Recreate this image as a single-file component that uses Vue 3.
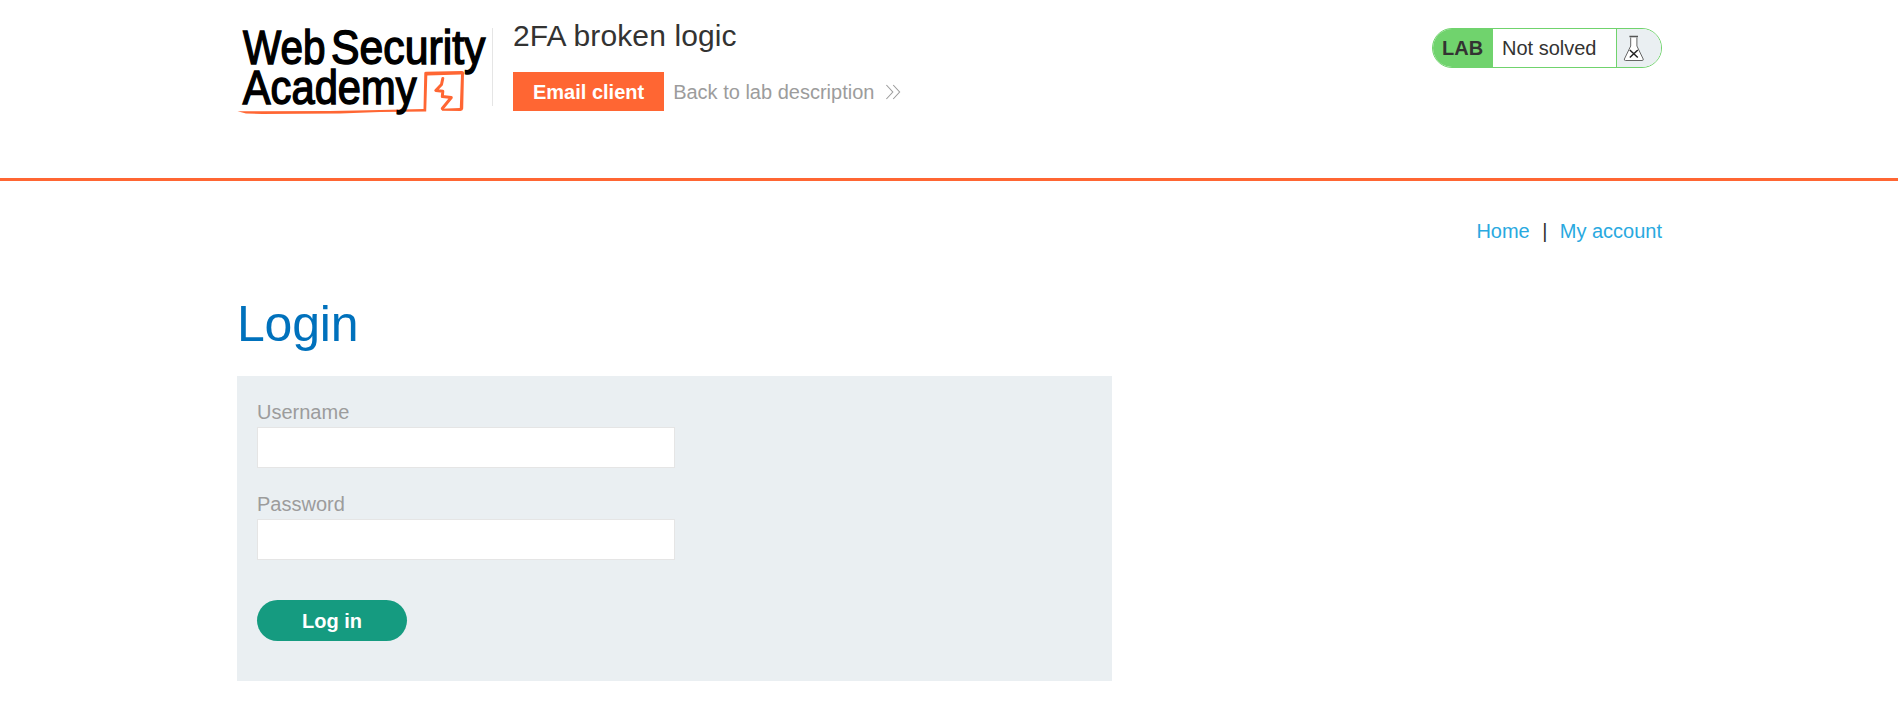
<script setup>
import { ref } from 'vue'

const username = ref('')
const password = ref('')
</script>

<template>
  <div class="page">
    <header class="header">
      <svg class="logo" width="252" height="92" viewBox="237 26 252 92" aria-label="Web Security Academy">
        <path fill="#ff6633" d="M237.5 111.2 L262 111.2 L330 110.9 L380 109.9 L423.5 108.9 L424.3 73 Q424.3 71.7 426 71.7 L462 70.9 Q464 71 464 72.8 L463.2 108.5 Q463 110.8 460.5 110.9 L442 110.8 L441.5 108.8 L459.8 108 L461 74.6 L427.3 75.4 L426.2 111.6 L380 112 L340 113.4 L262 113.9 L246 113.4 Z" />
        <path fill="none" stroke="#ff6633" stroke-width="3" stroke-linejoin="round" stroke-linecap="round" d="M442.8 78.5 L441.5 84.5 L435.8 90.5 L442.8 91.2 L442.3 96.6 L451.3 97.5 L442.3 108.5" />
        <g class="wordmark">
          <text x="243" y="63.7" textLength="82.4" lengthAdjust="spacingAndGlyphs">Web</text>
          <text x="331" y="63.7" textLength="154.4" lengthAdjust="spacingAndGlyphs">Security</text>
          <text x="242.8" y="104.1" textLength="173.8" lengthAdjust="spacingAndGlyphs">Academy</text>
        </g>
      </svg>
      <div class="lab-info">
        <h2>2FA broken logic</h2>
        <div class="actions">
          <a class="email">Email client</a>
          <a class="back">Back to lab description
            <svg width="16" height="16" viewBox="0 0 16 16"><path d="M1.4 1 L7.8 8 L1.4 15 M8.2 1 L14.6 8 L8.2 15" fill="none" stroke="#9c9c9c" stroke-width="1.1" /></svg>
          </a>
        </div>
      </div>
      <div class="status">
        <span class="lab">LAB</span>
        <span class="state">Not solved</span>
        <span class="flask">
          <svg width="22" height="28" viewBox="0 0 22 28">
            <path d="M7.7 2.5 V11 L1.4 24 Q1 25.5 2.4 25.5 H19.2 Q20.6 25.5 20.2 24 L13.9 11 V2.5" fill="#fff" stroke="#666" stroke-width="1" />
            <path d="M6.4 1.5 H15" stroke="#555" stroke-width="1.5" />
            <path d="M6.8 15 L14.8 22.5 M14.8 15 L6.8 22.5" stroke="#222" stroke-width="1.5" />
          </svg>
        </span>
      </div>
    </header>

    <main class="content">
      <nav class="links"><a>Home</a><span>|</span><a>My account</a></nav>
      <h1>Login</h1>
      <form class="login" @submit.prevent>
        <label for="username">Username</label>
        <input id="username" v-model="username" type="text">
        <label for="password">Password</label>
        <input id="password" v-model="password" type="password">
        <button type="submit">Log in</button>
      </form>
    </main>
  </div>
</template>

<style>
body { margin: 0; background: #fff; overflow: hidden; }
</style>

<style scoped>
.page {
  height: 703px;
  font-family: "Liberation Sans", Arial, sans-serif;
  font-size: 20px;
  line-height: 24px;
  color: #333332;
}
.header {
  box-sizing: border-box;
  height: 181px;
  padding: 0 236px 0 237px;
  border-bottom: 3px solid #ff6633;
  display: flex;
  align-items: flex-start;
}
.logo { display: block; margin-top: 26px; overflow: visible; }
.wordmark { font-family: "Liberation Sans", Arial, sans-serif; font-size: 48.5px; fill: #000; stroke: #000; stroke-width: 1.5px; }
.lab-info {
  margin: 28px 0 0 3px;
  height: 78px;
  border-left: 1px solid #e5e5e5;
  padding-left: 20px;
}
h2 { margin: -9px 0 0; font-size: 30px; line-height: 34px; font-weight: 400; letter-spacing: 0.12px; }
.actions { display: flex; align-items: center; margin-top: 19px; height: 39px; }
.email { height: 39px; background: #ff6633; color: #fff; font-weight: 700; padding: 0 20px; line-height: 40px; }
.back { display: flex; align-items: center; gap: 11px; margin-left: 9px; line-height: 40px; color: #9c9c9c; }
.status {
  box-sizing: border-box;
  display: flex;
  width: 230px;
  height: 40px;
  margin: 28px 0 0 auto;
  border: 1px solid #70d36d;
  border-radius: 20px;
  overflow: hidden;
  line-height: 38px;
}
.lab { box-sizing: border-box; width: 60px; padding-left: 9px; background: #70d36d; font-weight: 700; }
.state { box-sizing: border-box; width: 123px; padding-left: 9px; }
.flask {
  flex: 1;
  background: #eaeff2;
  border-left: 1px solid #70d36d;
  padding: 6px 0 0 6px;
  line-height: 0;
}
.content { padding: 38px 236px 0 237px; }
.links { display: flex; justify-content: flex-end; color: #29a9e0; }
.links span { width: 30px; text-align: center; color: #333332; }
h1 { margin: 52px 0 0; font-size: 50px; line-height: 58px; font-weight: 400; letter-spacing: -0.2px; color: #0071bc; }
.login {
  box-sizing: border-box;
  width: 875px;
  height: 305px;
  margin-top: 23px;
  padding: 24px 20px 0;
  background: #eaeff2;
}
label { display: block; color: #9c9c9c; }
input {
  box-sizing: border-box;
  display: block;
  width: 418px;
  height: 41px;
  margin: 3px 0 24px;
  padding: 0 8px;
  border: 1px solid #e5e5e5;
  background: #fff;
  font: inherit;
}
button {
  display: block;
  width: 150px;
  height: 41px;
  margin-top: 40px;
  padding: 0;
  border: 0;
  border-radius: 20.5px;
  background: #159b80;
  color: #fff;
  font: inherit;
  font-weight: 700;
}
</style>
